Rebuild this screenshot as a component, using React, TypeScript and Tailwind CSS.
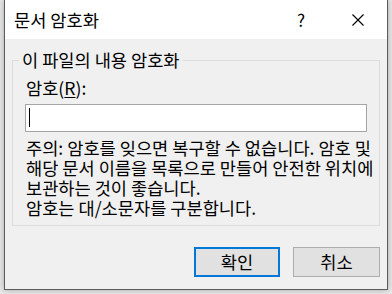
import { useState } from "react";

const FONT = { fontFamily: '"Noto Sans CJK KR", "Noto Sans", sans-serif' };

function CloseGlyph() {
  return (
    <svg width="12" height="12" viewBox="0 0 12 12" fill="none" stroke="#000" strokeWidth="1.1">
      <path d="M0.5 0.5 L11.5 11.5 M11.5 0.5 L0.5 11.5" />
    </svg>
  );
}

export default function App() {
  const [pw, setPw] = useState("");

  return (
    <div className="relative h-[294px] w-[392px] overflow-hidden bg-[#e9e9e9]" style={FONT}>
      <div className="ml-[4px] flex h-[290px] w-[384px] flex-col border-x border-b border-[#5c5c5c] bg-[#f0f0f0] shadow-[0_0_6px_rgba(0,0,0,0.3)]">
        {/* title bar */}
        <div className="flex h-[39px] shrink-0 items-center bg-white pl-[9px] text-[17.6px] text-black">
          <span className="leading-5">문서 암호화</span>
          <span className="ml-auto mr-[47px] text-[17px] leading-5">?</span>
          <span className="mr-[23px] flex items-center">
            <CloseGlyph />
          </span>
        </div>

        {/* group box */}
        <div className="relative mx-[7px] mt-[21px] border border-[#dcdcdc] px-[12px] pb-[7px] pt-[17px] text-[17.6px] leading-[20px] text-black">
          <span className="absolute left-[6px] top-[-11px] bg-[#f0f0f0] px-[3px] leading-[20px]">이 파일의 내용 암호화</span>
          <div className="pl-px">
            암호(<span className="underline underline-offset-2">R</span>):
          </div>
          <div className="relative mt-[6px] h-[28px] border border-[#a5a5a5] bg-white">
            <input
              value={pw}
              onChange={(e) => setPw(e.target.value)}
              type="password"
              className="h-full w-full bg-transparent px-[3px] outline-none"
            />
            <span className="absolute left-[3px] top-[3px] h-[19px] w-px bg-black" />
          </div>
          <p className="mt-[6px] whitespace-nowrap pl-px">
            주의: 암호를 잊으면 복구할 수 없습니다. 암호 및
            <br />
            해당 문서 이름을 목록으로 만들어 안전한 위치에
            <br />
            보관하는 것이 좋습니다.
            <br />
            암호는 대/소문자를 구분합니다.
          </p>
        </div>

        {/* buttons */}
        <div className="mr-[7px] mt-[21px] flex justify-end gap-[13px] text-[17.6px] text-black">
          <button type="button" className="h-[30px] w-[86px] border-2 border-[#0078d7] bg-[#e1e1e1] leading-5">
            확인
          </button>
          <button type="button" className="h-[30px] w-[87px] border border-[#adadad] bg-[#e1e1e1] leading-5">
            취소
          </button>
        </div>
      </div>
    </div>
  );
}
